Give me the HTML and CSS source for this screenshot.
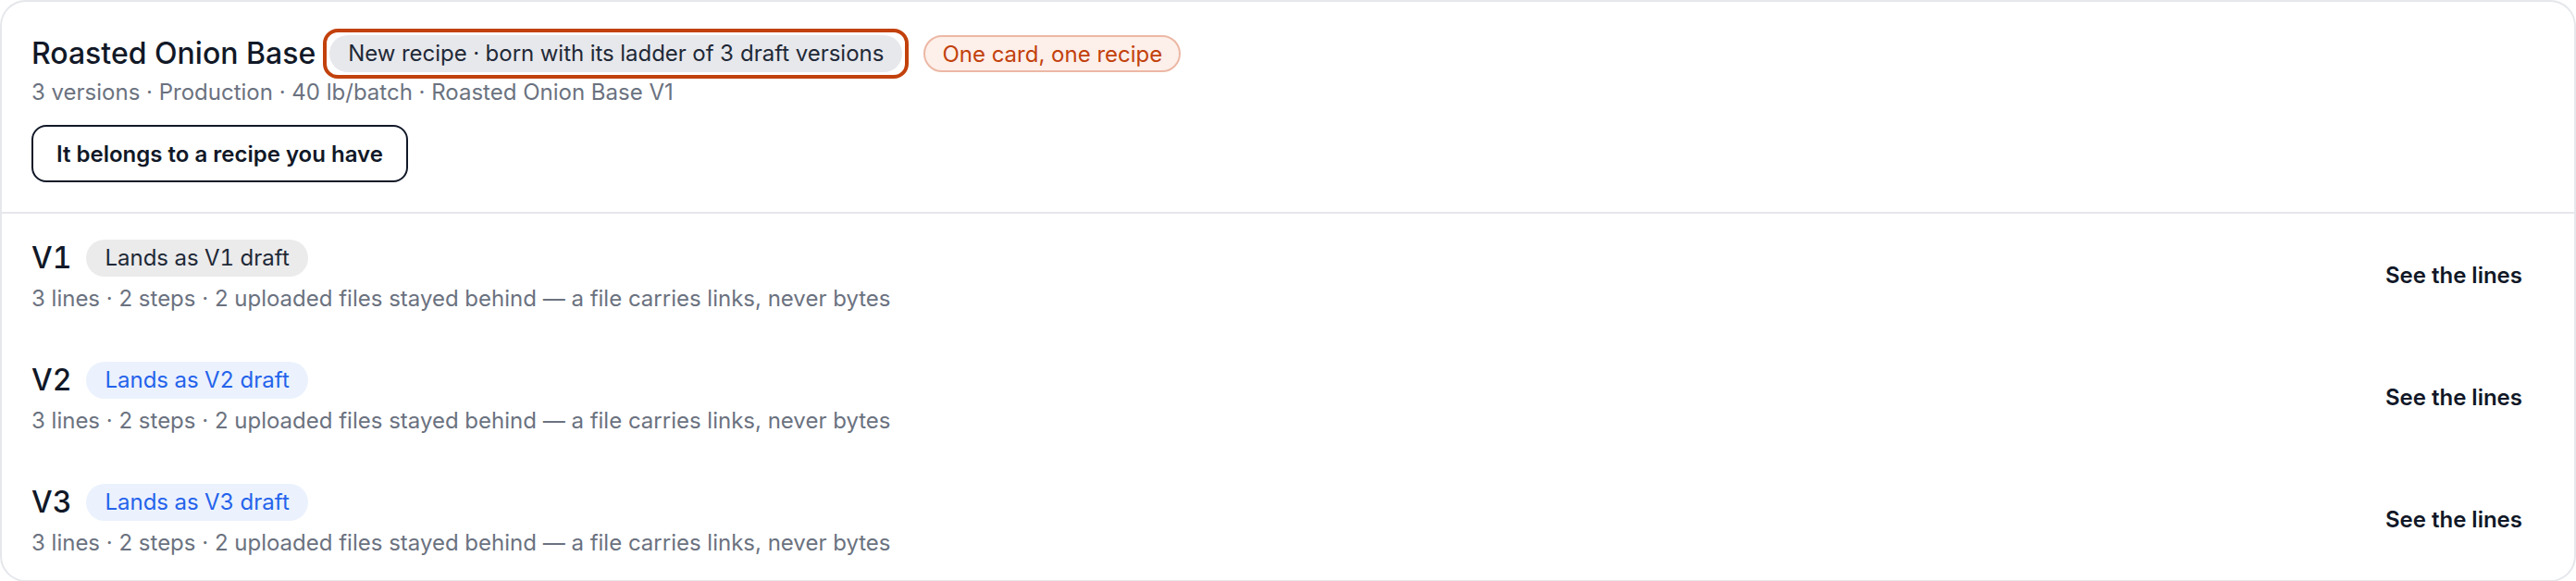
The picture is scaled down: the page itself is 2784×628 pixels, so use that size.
FILE: index.html
```html
<!DOCTYPE html>
<html lang="en">
<head>
<meta charset="utf-8">
<title>Roasted Onion Base</title>
<link rel="stylesheet" href="styles.css">
</head>
<body>
<div class="card">
  <div class="head">
    <div class="head-row">
      <h2 class="title">Roasted Onion Base</h2>
      <span class="ring"><span class="pill pill-gray">New recipe · born with its ladder of 3 draft versions</span></span>
      <span class="badge-orange">One card, one recipe</span>
    </div>
    <div class="meta">3 versions · Production · 40 lb/batch · Roasted Onion Base V1</div>
    <button class="btn-outline" type="button">It belongs to a recipe you have</button>
  </div>
  <div class="versions">
    <div class="vrow">
      <div class="vinfo">
        <div class="vline">
          <span class="vname">V1</span>
          <span class="pill pill-neutral">Lands as V1 draft</span>
        </div>
        <div class="vdesc">3 lines · 2 steps · 2 uploaded files stayed behind — a file carries links, never bytes</div>
      </div>
      <button class="btn-ghost" type="button">See the lines</button>
    </div>
    <div class="vrow">
      <div class="vinfo">
        <div class="vline">
          <span class="vname">V2</span>
          <span class="pill pill-blue">Lands as V2 draft</span>
        </div>
        <div class="vdesc">3 lines · 2 steps · 2 uploaded files stayed behind — a file carries links, never bytes</div>
      </div>
      <button class="btn-ghost" type="button">See the lines</button>
    </div>
    <div class="vrow">
      <div class="vinfo">
        <div class="vline">
          <span class="vname">V3</span>
          <span class="pill pill-blue">Lands as V3 draft</span>
        </div>
        <div class="vdesc">3 lines · 2 steps · 2 uploaded files stayed behind — a file carries links, never bytes</div>
      </div>
      <button class="btn-ghost" type="button">See the lines</button>
    </div>
  </div>
</div>
</body>
</html>
```

FILE: styles.css
```css
* { box-sizing: border-box; }
html, body {
  margin: 0;
  padding: 0;
  background: #ffffff;
}
body {
  font-family: Inter, "Noto Sans", "Liberation Sans", sans-serif;
  color: #111827;
}
.card {
  border: 2px solid #e5e7eb;
  border-radius: 28px;
  background: #ffffff;
  overflow: hidden;
}
.head {
  padding: 32px 32px 32px 32px;
  border-bottom: 2px solid #e5e7eb;
}
.head-row {
  display: flex;
  align-items: center;
  height: 48px;
}
.title {
  margin: 0;
  font-size: 32px;
  line-height: 48px;
  font-weight: 500;
  color: #111827;
}
.ring {
  display: inline-flex;
  margin: -3px 16px -3px 8px;
  padding: 3px;
  border: 4px solid #c2410c;
  border-radius: 16px;
}
.pill {
  display: inline-flex;
  align-items: center;
  height: 40px;
  padding: 0 20px;
  border-radius: 20px;
  font-size: 24px;
  line-height: 40px;
  font-weight: 400;
  white-space: nowrap;
  font-variant-numeric: tabular-nums;
}
.pill-gray {
  background: #e7e8ec;
  color: #1f2937;
}
.pill-neutral {
  background: #ebebec;
  color: #1f2937;
}
.pill-blue {
  background: #ebf2fd;
  color: #2563eb;
}
.badge-orange {
  display: inline-flex;
  align-items: center;
  height: 40px;
  padding: 0 18px;
  border: 2px solid #ecb8a5;
  border-radius: 20px;
  background: #fdefe9;
  color: #c2410c;
  font-size: 24px;
  font-weight: 400;
  white-space: nowrap;
}
.meta {
  font-size: 24px;
  line-height: 36px;
  color: #6b7280;
}
.btn-outline {
  display: inline-flex;
  align-items: center;
  margin-top: 17px;
  height: 62px;
  padding: 0 25px;
  border: 2px solid #111827;
  border-radius: 16px;
  background: #ffffff;
  color: #111827;
  font-family: inherit;
  font-size: 24px;
  font-weight: 600;
  cursor: pointer;
}
.versions {
  display: flex;
  flex-direction: column;
}
.vrow {
  display: flex;
  align-items: center;
  justify-content: space-between;
  padding: 24px 32px;
}
.vinfo {
  display: flex;
  flex-direction: column;
}
.vline {
  display: flex;
  align-items: center;
  gap: 16px;
  height: 48px;
}
.vname {
  font-size: 32px;
  line-height: 48px;
  font-weight: 500;
  color: #111827;
  font-variant-numeric: tabular-nums;
}
.vdesc {
  margin-top: 4px;
  font-size: 24px;
  line-height: 32px;
  color: #6b7280;
}
.btn-ghost {
  padding: 12px 24px;
  border: none;
  background: transparent;
  color: #111827;
  font-family: inherit;
  font-size: 24px;
  font-weight: 600;
  cursor: pointer;
}
```
